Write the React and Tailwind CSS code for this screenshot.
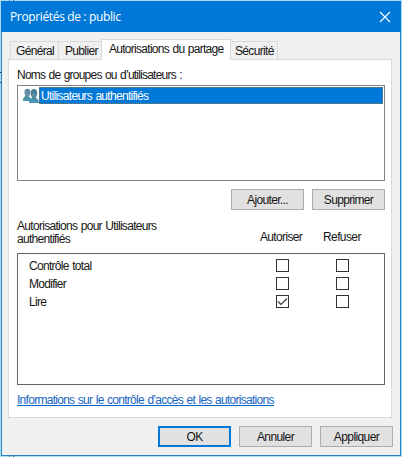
import React from "react";

function Tab({ children, className }) {
  return (
    <div className={`box-border border border-[#d9d9d9] whitespace-nowrap ${className}`}>{children}</div>
  );
}

function Button({ children, className = "border border-[#adadad]" }) {
  return (
    <button className={`flex h-[21px] w-[73px] items-center justify-center whitespace-nowrap bg-[#e1e1e1] pt-[2px] ${className}`}>
      {children}
    </button>
  );
}

function Check({ on }) {
  return (
    <span className="flex size-[13px] shrink-0 items-center justify-center border border-[#333] bg-white">
      {on && (
        <svg width="11" height="11" viewBox="0 0 11 11" fill="none" stroke="#3a3a3a" strokeWidth="1.2">
          <path d="M1 5.500 4 8.500 10 2.500" />
        </svg>
      )}
    </span>
  );
}

function PermissionRow({ label, allowed }) {
  return (
    <div className="flex h-[18px] items-center pl-[11px]">
      <span className="w-[247px] pt-[2px]">{label}</span>
      <Check on={allowed} />
      <span className="w-[47px]" />
      <Check />
    </div>
  );
}

function UsersIcon() {
  return (
    <svg className="shrink-0" width="16" height="16" viewBox="0 0 16 16">
      <path d="M0 13c0-4 1.500-5 4-5s4 1.500 4.500 5z" fill="#4e93a5" />
      <path d="M1.500 4C1.500 1.700 2.500.8 4.500.8S7.300 2 7.300 4.300 6.200 9 4.500 9 1.500 6.500 1.500 4z" fill="#5b8ba0" />
      <path d="M3 4.800h3c0 2-.6 3-1.500 3S3 6.800 3 4.800z" fill="#7397a3" />
      <path d="M6 15c0-4 2-5.500 4.800-5.500S15.700 11 16 15z" fill="#4a94b4" />
      <path d="M7.600 4.700C7.600 2.200 8.800 1 11 1s3.200 1.500 3.200 4-1.400 5.500-3.200 5.500-3.400-3-3.400-5.800z" fill="#47809c" />
      <path d="M9.300 5.400h3.300c0 2.500-.6 3.800-1.600 3.800s-1.700-1.300-1.700-3.800z" fill="#6690a3" />
    </svg>
  );
}

export default function App() {
  return (
    <div className="relative h-[457px] w-[402px] overflow-hidden bg-[#a9dcf2] p-px pb-0 font-['Liberation_Sans',Arial,sans-serif] text-[12px] leading-[13px] tracking-[-0.76px] text-[#151515] [word-spacing:0.8px]">
      {/* Edges of the window behind the dialog */}
      <span className="absolute top-0 left-[9px] h-px w-[5px] border-x border-[#4b7488]" />
      <span className="absolute top-[72px] left-0 h-[11px] w-px border-y border-[#123c55]" />
      <span className="absolute bottom-0 left-[9px] h-px w-[5px] border-x border-[#4b7488]" />

      <div className="flex h-[455px] w-[400px] flex-col border border-[#2482c5] bg-[#f0f0f0]">
        <header className="-mx-px -mt-px flex h-[31px] shrink-0 items-center justify-between bg-[#0078d7] pr-[10px] pl-[9px] font-['Open_Sans','Noto_Sans',sans-serif] text-[12px] tracking-[-0.36px] text-white [word-spacing:normal]">
          <span>Propriétés de : public</span>
          <svg width="12" height="12" viewBox="0 0 12 12" fill="none" stroke="white" strokeWidth="1.1">
            <path d="m1 1 10 10M11 1 1 11" />
          </svg>
        </header>

        <nav className="mt-[7px] flex h-[20px] shrink-0 items-end pl-[8px] tracking-[-0.66px]">
          <Tab className="h-[18px] w-[49px] border-b-0 pt-[3px] pl-[5px]">Général</Tab>
          <Tab className="h-[18px] w-[42px] border-x-0 border-b-0 pt-[3px] pl-[6px]">Publier</Tab>
          <Tab className="relative -mb-px h-[21px] w-[130px] border-b-0 bg-white pt-[3px] pl-[7px] tracking-[-0.72px]">Autorisations du partage</Tab>
          <Tab className="h-[18px] w-[47px] border-b-0 border-l-0 pt-[3px] pl-[4px]">Sécurité</Tab>
        </nav>

        <main className="ml-[6px] flex h-[359px] w-[384px] shrink-0 flex-col border border-[#d9d9d9] bg-white pl-[8px] tracking-[-0.7px]">
          <div className="mt-[9px] h-[16px] whitespace-nowrap tracking-[-0.78px]">Noms de groupes ou d’utilisateurs :</div>
          <section className="h-[96px] w-[368px] shrink-0 border border-[#828282] p-px">
            <div className="flex h-[17px] items-center pl-[4px]">
              <UsersIcon />
              <div className="flex h-[17px] flex-1 items-center border border-dotted border-[#8a7950] bg-[#0078d7] pt-px pl-px text-white">
                Utilisateurs authentifiés
              </div>
            </div>
          </section>
          <div className="mt-[8px] flex w-[368px] justify-end gap-[8px] tracking-[-0.66px]">
            <Button>Ajouter...</Button>
            <Button>Supprimer</Button>
          </div>
          <div className="mt-[10px] flex h-[33px] w-[368px] shrink-0">
            <p className="w-[243px]">Autorisations pour Utilisateurs<br />authentifiés</p>
            <span className="mt-[11px] w-[63px] tracking-[-0.66px]">Autoriser</span>
            <span className="mt-[11px] tracking-[-0.6px]">Refuser</span>
          </div>
          <section className="h-[132px] w-[368px] shrink-0 border border-[#646464] pt-[2px]">
            <PermissionRow label="Contrôle total" />
            <PermissionRow label="Modifier" />
            <PermissionRow label="Lire" allowed />
          </section>
          <a className="mt-[8px] h-[13px] w-fit whitespace-nowrap border-b border-[#0066cc] pt-px tracking-[-0.72px] text-[#1765c2]">
            Informations sur le contrôle d’accès et les autorisations
          </a>
        </main>

        <footer className="mt-[8px] flex justify-end gap-[8px] pr-[7px] tracking-[-0.6px]">
          <Button className="border-2 border-[#0078d7]">OK</Button>
          <Button>Annuler</Button>
          <Button>Appliquer</Button>
        </footer>
      </div>
    </div>
  );
}
